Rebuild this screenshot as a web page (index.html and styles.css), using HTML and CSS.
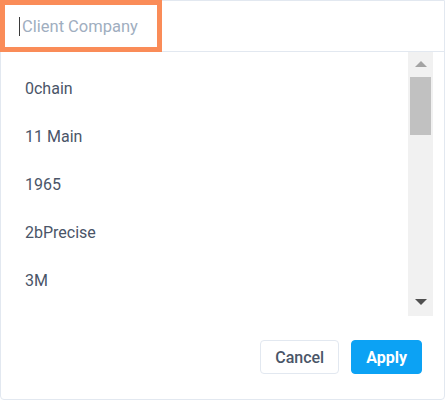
FILE: index.html
```html
<!DOCTYPE html>
<html>
<head>
<meta charset="utf-8">
<link rel="stylesheet" href="styles.css">
</head>
<body>
<div class="panel">
  <div class="header">
    <div class="search"><span class="caret"></span><span class="placeholder">Client Company</span></div>
  </div>
  <div class="body">
    <ul class="list">
      <li>0chain</li>
      <li>11 Main</li>
      <li>1965</li>
      <li>2bPrecise</li>
      <li>3M</li>
    </ul>
    <div class="scrollbar">
      <div class="arrow up"></div>
      <div class="track"><div class="thumb"></div></div>
      <div class="arrow down"></div>
    </div>
  </div>
  <div class="footer">
    <button class="btn cancel">Cancel</button>
    <button class="btn apply">Apply</button>
  </div>
</div>
</body>
</html>
```
FILE: styles.css
```css
html, body {
  margin: 0;
  padding: 0;
  background: #ffffff;
}
body {
  font-family: Roboto, "Liberation Sans", sans-serif;
  width: 447px;
  height: 402px;
  overflow: hidden;
}
.panel {
  box-sizing: border-box;
  width: 445px;
  height: 400px;
  border: 1px solid #e2e8f0;
  border-radius: 0 0 4px 4px;
  display: flex;
  flex-direction: column;
}
.header {
  height: 50px;
  border-bottom: 1px solid #e2e8f0;
  display: flex;
  align-items: flex-start;
}
.search {
  box-sizing: border-box;
  margin: 4px 0 0 4px;
  width: 152px;
  height: 42px;
  outline: 5px solid #fa8c58;
  display: flex;
  align-items: center;
  padding-left: 14px;
}
.caret {
  width: 1px;
  height: 19px;
  background: #3a3a3a;
  margin-right: 2px;
}
.placeholder {
  font-size: 16.5px;
  color: #a0aec0;
}
.body {
  height: 264px;
  display: flex;
  padding-right: 11px;
}
.list {
  list-style: none;
  margin: 0;
  padding: 13px 0 0 24px;
  flex: 1;
  overflow: hidden;
}
.list li {
  height: 48px;
  line-height: 48px;
  font-size: 16px;
  color: #4a5568;
}
.scrollbar {
  width: 25px;
  background: #f1f1f1;
  display: flex;
  flex-direction: column;
}
.arrow {
  height: 24px;
  display: flex;
  justify-content: center;
}
.arrow.up::before {
  content: "";
  margin-top: 9px;
  border-left: 6px solid transparent;
  border-right: 6px solid transparent;
  border-bottom: 6px solid #a3a3a3;
  height: 0;
}
.arrow.down::before {
  content: "";
  margin-top: 7px;
  border-left: 6px solid transparent;
  border-right: 6px solid transparent;
  border-top: 6px solid #505050;
  height: 0;
}
.track {
  flex: 1;
  padding: 0 2px;
}
.thumb {
  margin-top: 1px;
  height: 58px;
  background: #c1c1c1;
}
.footer {
  flex: 1;
  display: flex;
  justify-content: flex-end;
  align-items: flex-start;
  gap: 12px;
  padding: 24px 22px 0 0;
}
.btn {
  box-sizing: border-box;
  height: 34px;
  border-radius: 4px;
  font-family: Roboto, "Liberation Sans", sans-serif;
  font-size: 16px;
  padding: 0 14px;
  cursor: pointer;
}
.cancel {
  background: #ffffff;
  border: 1px solid #e2e8f0;
  color: #4a5568;
  font-weight: 500;
}
.apply {
  background: #0ca2f4;
  border: 1px solid #0ca2f4;
  color: #ffffff;
  font-weight: 700;
}
```
